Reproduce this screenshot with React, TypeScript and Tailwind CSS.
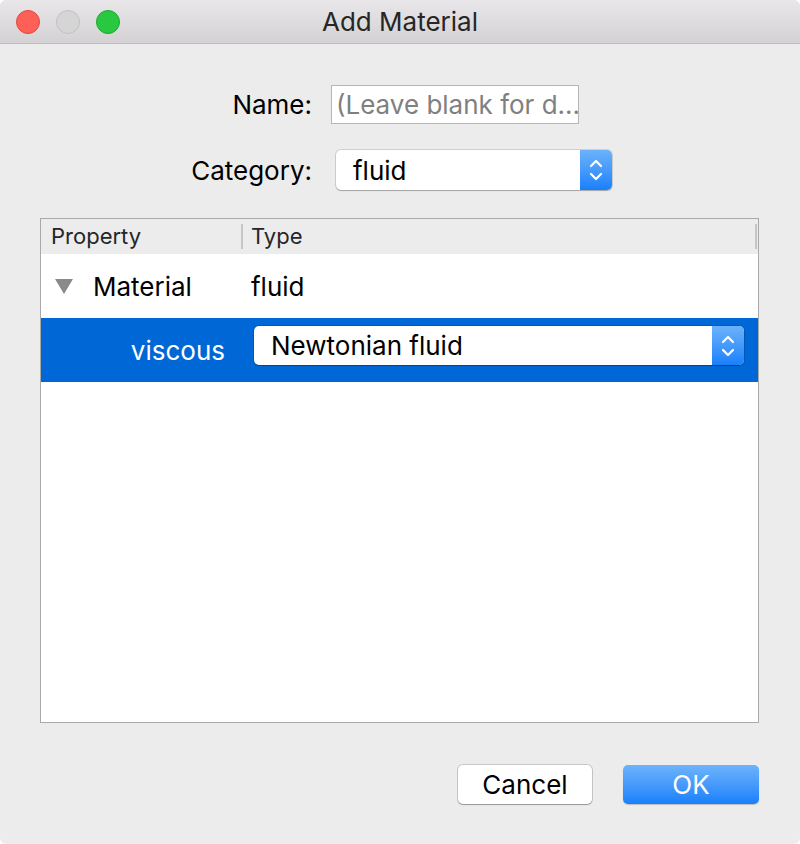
import React from 'react';

const FONT = { fontFamily: 'Inter, "Liberation Sans", sans-serif' };

const Stepper = () => (
    <div className="w-[32px] self-stretch rounded-r-[5px] bg-gradient-to-b from-[#6ab2fb] to-[#1580fb] flex items-center justify-center">
        <svg width="14" height="24" viewBox="0 0 14 24" fill="none" stroke="white" strokeWidth="2.2" strokeLinecap="round" strokeLinejoin="round">
            <path d="M2 8 L7 3 L12 8" />
            <path d="M2 16 L7 21 L12 16" />
        </svg>
    </div>
);

const PopUp = ({ value, className }: { value: string; className: string }) => (
    <div className={`flex items-stretch bg-white rounded-[5px] shadow-[0_0_0_1px_rgba(0,0,0,0.12),0_1px_1px_rgba(0,0,0,0.2)] ${className}`}>
        <span className="flex-1 pl-[17px] flex items-center text-black">{value}</span>
        <Stepper />
    </div>
);

const App: React.FC = () => {
    return (
        <div className="w-[800px] h-[844px] bg-white text-[26px]" style={FONT}>
            <div className="w-full h-full rounded-[6px] overflow-hidden bg-[#ececec] flex flex-col">
                {/* title bar */}
                <div className="h-[44px] shrink-0 relative flex items-center justify-center bg-gradient-to-b from-[#e9e7e9] to-[#d3d1d3] border-b border-[#bdbdbd]">
                    <div className="absolute left-[16px] top-[10px] flex gap-[16px]">
                        <span className="w-[24px] h-[24px] rounded-full bg-[#fe5f57] border border-[#e2463f]" />
                        <span className="w-[24px] h-[24px] rounded-full bg-[#d5d5d5] border border-[#c2c2c2]" />
                        <span className="w-[24px] h-[24px] rounded-full bg-[#28c840] border border-[#1aab29]" />
                    </div>
                    <span className="text-[#262626]">Add Material</span>
                </div>

                {/* form */}
                <div className="flex items-center mt-[41px]">
                    <span className="w-[312px] text-right text-black">Name:</span>
                    <div className="ml-[19px] w-[248px] h-[39px] bg-white border border-[#b5b5b5] pl-[4px] flex items-center text-[#808080] whitespace-nowrap overflow-hidden">
                        (Leave blank for d...
                    </div>
                </div>
                <div className="flex items-center mt-[26px]">
                    <span className="w-[312px] text-right text-black">Category:</span>
                    <PopUp value="fluid" className="ml-[24px] w-[276px] h-[40px]" />
                </div>

                {/* property table */}
                <div className="ml-[40px] mt-[28px] w-[719px] h-[505px] border border-[#a9a9a9] bg-white flex flex-col">
                    <div className="h-[35px] bg-[#ececec] flex items-center text-[22px] text-[#262626]">
                        <span className="w-[200px] pl-[10px]">Property</span>
                        <span className="w-[2px] h-[25px] bg-[#c6c6c6]" />
                        <span className="pl-[8px] flex-1">Type</span>
                        <span className="w-[2px] h-[25px] bg-[#c6c6c6] mr-[1px]" />
                    </div>
                    <div className="h-[64px] flex items-center text-black">
                        <svg className="ml-[14px]" width="18" height="15" viewBox="0 0 18 15">
                            <path d="M0 0 H18 L9 15 Z" fill="#8a8a8a" />
                        </svg>
                        <span className="ml-[20px] w-[158px]">Material</span>
                        <span>fluid</span>
                    </div>
                    <div className="h-[64px] flex items-start bg-[#0067d7]">
                        <span className="w-[184px] h-[64px] flex items-center justify-end text-white">viscous</span>
                        <PopUp value="Newtonian fluid" className="ml-[29px] mt-[8px] w-[490px] h-[39px]" />
                    </div>
                </div>

                {/* buttons */}
                <div className="flex justify-end gap-[31px] mt-auto mb-[40px] mr-[41px]">
                    <button className="w-[134px] h-[39px] rounded-[5px] bg-white text-black shadow-[0_0_0_1px_rgba(0,0,0,0.15),0_1px_1px_rgba(0,0,0,0.25)]">
                        Cancel
                    </button>
                    <button className="w-[136px] h-[39px] rounded-[5px] bg-gradient-to-b from-[#6cb3fb] to-[#1580fb] text-white shadow-[0_1px_1px_rgba(0,0,0,0.2)]">
                        OK
                    </button>
                </div>
            </div>
        </div>
    );
};

export default App;
